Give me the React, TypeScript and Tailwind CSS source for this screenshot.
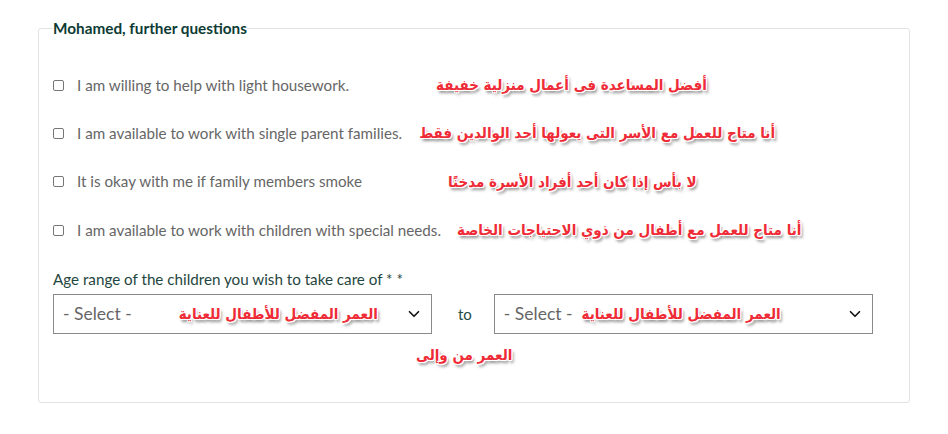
import React from "react";

const ann =
  "whitespace-nowrap font-bold text-[15px] leading-[20px] text-[#ee2b36] [font-family:'DejaVu_Sans_Condensed','DejaVu_Sans',sans-serif] [font-stretch:condensed] [text-shadow:1px_0_0_#fff,-1px_0_0_#fff,0_1px_0_#fff,0_-1px_0_#fff,1px_1px_0_#fff,-1px_-1px_0_#fff,1px_-1px_0_#fff,-1px_1px_0_#fff,2px_3px_3px_rgba(0,0,0,0.45)]";

function Chevron() {
  return (
    <svg width="18" height="18" viewBox="0 0 24 24" fill="none" stroke="#111" strokeWidth="2.2" strokeLinecap="round" strokeLinejoin="round">
      <path d="m6 9 6 6 6-6" />
    </svg>
  );
}

function Note({ text, className }: { text: string; className: string }) {
  return (
    <span dir="rtl" className={ann + " " + className}>
      {text}
    </span>
  );
}

function Row({ text, note, gap }: { text: string; note: string; gap: string }) {
  return (
    <div className="flex h-[48.3px] items-center">
      <span className="box-border h-[11px] w-[11px] shrink-0 rounded-[2px] border border-[#767676] bg-white" />
      <span className="ml-[13px] text-[15.2px] text-[#666]">{text}</span>
      <Note text={note} className={gap} />
    </div>
  );
}

function Select({ gap }: { gap: string }) {
  return (
    <div className="flex h-[40px] w-[379px] items-center border border-[#8a8a8a] bg-white pl-[9px] pr-[8px]">
      <span className="text-[17.5px] text-[#666]">- Select -</span>
      <Note text="العمر المفضل للأطفال للعناية" className={gap} />
      <span className="ml-auto flex">
        <Chevron />
      </span>
    </div>
  );
}

export default function App() {
  return (
    <div className="h-[434px] w-[948px] bg-white [font-family:Lato,'Open_Sans',sans-serif]">
      <div className="pl-[38px] pt-[17px]">
        <fieldset className="w-[872px] rounded-[3px] border border-[#e3e3e3] pb-[36px] pl-[14px] pr-[14px]">
          <legend className="px-0 text-[15.3px] leading-[22px] font-bold text-[#0d3b34]">
            Mohamed, further questions
          </legend>
          <div className="mt-[22px]">
            <Row text="I am willing to help with light housework." note="أفضل المساعدة فى أعمال منزلية خفيفة" gap="ml-[87px]" />
            <Row text="I am available to work with single parent families." note="أنا متاح للعمل مع الأسر التى يعولها أحد الوالدين فقط" gap="ml-[17px]" />
            <Row text="It is okay with me if family members smoke" note="لا بأس إذا كان أحد أفراد الأسرة مدخنًا" gap="ml-[86px]" />
            <Row text="I am available to work with children with special needs." note="أنا متاح للعمل مع أطفال من ذوي الاحتياجات الخاصة" gap="ml-[16px]" />
          </div>
          <div className="mt-[15px] text-[15.2px] leading-[20px] text-[#1f4640]">
            Age range of the children you wish to take care of * *
          </div>
          <div className="mt-[5px] flex items-center">
            <Select gap="ml-[47px]" />
            <span className="ml-[26px] mr-[22px] text-[15px] text-[#1f4d47]">to</span>
            <Select gap="ml-[9px]" />
          </div>
          <div className="mt-[8px] pl-[363px]">
            <Note text="العمر من وإلى" className="" />
          </div>
        </fieldset>
      </div>
    </div>
  );
}
